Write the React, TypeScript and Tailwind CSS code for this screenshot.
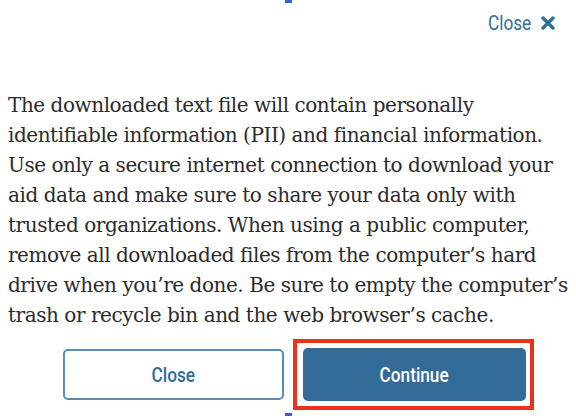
import React from 'react';

const serif = { fontFamily: '"DejaVu Serif", "Liberation Serif", serif' };
const sans = { fontFamily: 'Roboto, "Liberation Sans", sans-serif' };

const CloseIcon = () => (
  <svg width="14" height="14" viewBox="0 0 14 14" className="text-[#2f6d9c]">
    <path d="M2 2 L12 12 M12 2 L2 12" stroke="currentColor" strokeWidth="3.4" strokeLinecap="round" />
  </svg>
);

export default function App() {
  return (
    <div className="w-[576px] h-[416px] bg-white overflow-hidden flex flex-col">
      <div className="h-[3px] w-[7px] ml-[285px] bg-[#2f62d6]" />

      <div className="flex justify-end items-center gap-[10px] pr-[21px] mt-[10px] h-[20px]" style={sans}>
        <span className="inline-block origin-right scale-x-[0.86] text-[20px] leading-none text-[#2f6d9c]">Close</span>
        <CloseIcon />
      </div>

      <p className="pl-2 pr-[2px] mt-[57px] text-[20px] tracking-[-0.45px] leading-[30px] text-[#2b2b2b]" style={serif}>
        The downloaded text file will contain personally identifiable information (PII) and financial information. Use only a secure internet connection to download your aid data and make sure to share your data only with trusted organizations. When using a public computer, remove all downloaded files from the computer’s hard drive when you’re done. Be sure to empty the computer’s trash or recycle bin and the web browser’s cache.
      </p>

      <div className="flex items-start mt-auto" style={sans}>
        <button className="ml-[63px] mt-[10px] w-[221px] h-[51px] rounded-[5px] border-2 border-[#5a8cb6] bg-white text-[20px] font-medium text-[#336a98]">
          <span className="inline-block scale-x-[0.86]">Close</span>
        </button>
        <div className="ml-[9px] border-4 border-[#e7331c] pl-[6px] pr-[4px] py-[5px]">
          <button className="w-[223px] h-[53px] rounded-[5px] bg-[#326a98] text-[20px] font-medium text-white">
            <span className="inline-block scale-x-[0.86]">Continue</span>
          </button>
        </div>
      </div>

      <div className="h-[3px] w-[7px] ml-[285px] mt-[3px] bg-[#2f62d6]" />
    </div>
  );
}
